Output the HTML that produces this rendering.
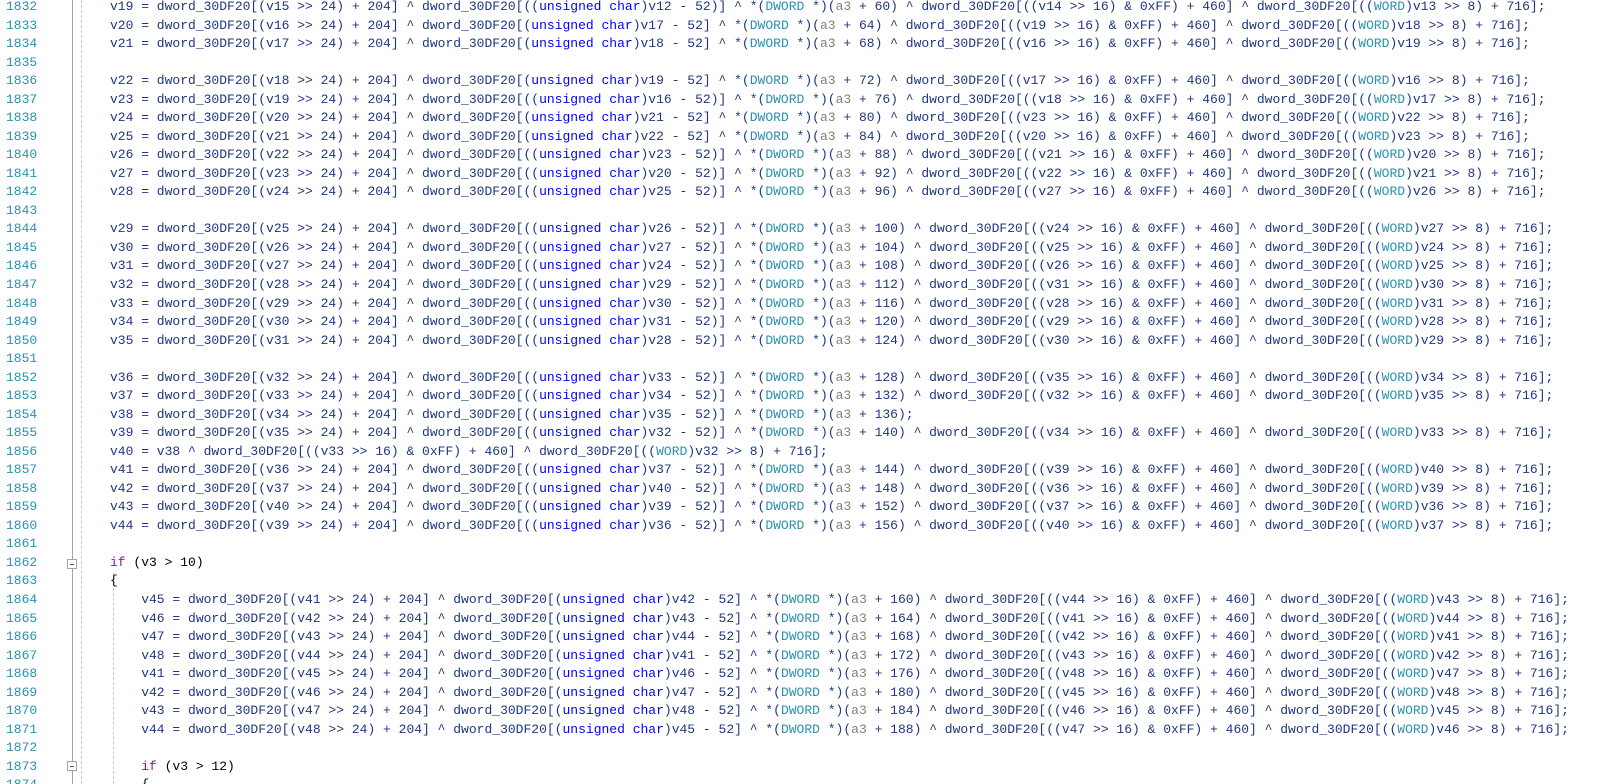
<!DOCTYPE html>
<html><head><meta charset="utf-8"><style>
html,body{margin:0;padding:0;background:#fff;width:1601px;height:784px;overflow:hidden;position:relative}
pre{margin:0;font-family:"Liberation Mono",monospace;font-size:13px;line-height:18.53px;white-space:pre;position:absolute;top:-2px}
#num{left:6px;color:#2b91af}
#code{left:110px;color:#1f377f}
.o{color:#000}
.t{color:#0000ff}
.w{color:#2b91af}
.p{color:#808080}
.k{color:#8f08c4}
.gl{position:absolute;left:72px;top:0;width:1px;height:784px;background:#a5a5a5}
.d1{position:absolute;left:81px;top:0;width:0;height:784px;border-left:1px dashed #c8c8c8}
.d2{position:absolute;left:113px;top:573px;width:0;height:211px;border-left:1px dashed #c8c8c8}
.fb{position:absolute;left:67px;width:8px;height:8px;border:1px solid #a5a5a5;background:#fff}
.fb:after{content:"";position:absolute;left:2px;top:3.5px;width:4px;height:1px;background:#555}
</style></head><body>
<div class="gl"></div><div class="d1"></div><div class="d2"></div>
<div class="fb" style="top:559px"></div>
<div class="fb" style="top:761px"></div>
<pre id="num">1832
1833
1834
1835
1836
1837
1838
1839
1840
1841
1842
1843
1844
1845
1846
1847
1848
1849
1850
1851
1852
1853
1854
1855
1856
1857
1858
1859
1860
1861
1862
1863
1864
1865
1866
1867
1868
1869
1870
1871
1872
1873
1874</pre>
<pre id="code">v19 = dword_30DF20[(v15 &gt;&gt; 24) + 204] ^ dword_30DF20[((<span class="t">unsigned char</span>)v12 - 52)] ^ *(<span class="w">DWORD</span> *)(<span class="p">a3</span> + 60) ^ dword_30DF20[((v14 &gt;&gt; 16) &amp; 0xFF) + 460] ^ dword_30DF20[((<span class="w">WORD</span>)v13 &gt;&gt; 8) + 716];
v20 = dword_30DF20[(v16 &gt;&gt; 24) + 204] ^ dword_30DF20[(<span class="t">unsigned char</span>)v17 - 52] ^ *(<span class="w">DWORD</span> *)(<span class="p">a3</span> + 64) ^ dword_30DF20[((v19 &gt;&gt; 16) &amp; 0xFF) + 460] ^ dword_30DF20[((<span class="w">WORD</span>)v18 &gt;&gt; 8) + 716];
v21 = dword_30DF20[(v17 &gt;&gt; 24) + 204] ^ dword_30DF20[(<span class="t">unsigned char</span>)v18 - 52] ^ *(<span class="w">DWORD</span> *)(<span class="p">a3</span> + 68) ^ dword_30DF20[((v16 &gt;&gt; 16) &amp; 0xFF) + 460] ^ dword_30DF20[((<span class="w">WORD</span>)v19 &gt;&gt; 8) + 716];

v22 = dword_30DF20[(v18 &gt;&gt; 24) + 204] ^ dword_30DF20[(<span class="t">unsigned char</span>)v19 - 52] ^ *(<span class="w">DWORD</span> *)(<span class="p">a3</span> + 72) ^ dword_30DF20[((v17 &gt;&gt; 16) &amp; 0xFF) + 460] ^ dword_30DF20[((<span class="w">WORD</span>)v16 &gt;&gt; 8) + 716];
v23 = dword_30DF20[(v19 &gt;&gt; 24) + 204] ^ dword_30DF20[((<span class="t">unsigned char</span>)v16 - 52)] ^ *(<span class="w">DWORD</span> *)(<span class="p">a3</span> + 76) ^ dword_30DF20[((v18 &gt;&gt; 16) &amp; 0xFF) + 460] ^ dword_30DF20[((<span class="w">WORD</span>)v17 &gt;&gt; 8) + 716];
v24 = dword_30DF20[(v20 &gt;&gt; 24) + 204] ^ dword_30DF20[(<span class="t">unsigned char</span>)v21 - 52] ^ *(<span class="w">DWORD</span> *)(<span class="p">a3</span> + 80) ^ dword_30DF20[((v23 &gt;&gt; 16) &amp; 0xFF) + 460] ^ dword_30DF20[((<span class="w">WORD</span>)v22 &gt;&gt; 8) + 716];
v25 = dword_30DF20[(v21 &gt;&gt; 24) + 204] ^ dword_30DF20[(<span class="t">unsigned char</span>)v22 - 52] ^ *(<span class="w">DWORD</span> *)(<span class="p">a3</span> + 84) ^ dword_30DF20[((v20 &gt;&gt; 16) &amp; 0xFF) + 460] ^ dword_30DF20[((<span class="w">WORD</span>)v23 &gt;&gt; 8) + 716];
v26 = dword_30DF20[(v22 &gt;&gt; 24) + 204] ^ dword_30DF20[((<span class="t">unsigned char</span>)v23 - 52)] ^ *(<span class="w">DWORD</span> *)(<span class="p">a3</span> + 88) ^ dword_30DF20[((v21 &gt;&gt; 16) &amp; 0xFF) + 460] ^ dword_30DF20[((<span class="w">WORD</span>)v20 &gt;&gt; 8) + 716];
v27 = dword_30DF20[(v23 &gt;&gt; 24) + 204] ^ dword_30DF20[((<span class="t">unsigned char</span>)v20 - 52)] ^ *(<span class="w">DWORD</span> *)(<span class="p">a3</span> + 92) ^ dword_30DF20[((v22 &gt;&gt; 16) &amp; 0xFF) + 460] ^ dword_30DF20[((<span class="w">WORD</span>)v21 &gt;&gt; 8) + 716];
v28 = dword_30DF20[(v24 &gt;&gt; 24) + 204] ^ dword_30DF20[((<span class="t">unsigned char</span>)v25 - 52)] ^ *(<span class="w">DWORD</span> *)(<span class="p">a3</span> + 96) ^ dword_30DF20[((v27 &gt;&gt; 16) &amp; 0xFF) + 460] ^ dword_30DF20[((<span class="w">WORD</span>)v26 &gt;&gt; 8) + 716];

v29 = dword_30DF20[(v25 &gt;&gt; 24) + 204] ^ dword_30DF20[((<span class="t">unsigned char</span>)v26 - 52)] ^ *(<span class="w">DWORD</span> *)(<span class="p">a3</span> + 100) ^ dword_30DF20[((v24 &gt;&gt; 16) &amp; 0xFF) + 460] ^ dword_30DF20[((<span class="w">WORD</span>)v27 &gt;&gt; 8) + 716];
v30 = dword_30DF20[(v26 &gt;&gt; 24) + 204] ^ dword_30DF20[((<span class="t">unsigned char</span>)v27 - 52)] ^ *(<span class="w">DWORD</span> *)(<span class="p">a3</span> + 104) ^ dword_30DF20[((v25 &gt;&gt; 16) &amp; 0xFF) + 460] ^ dword_30DF20[((<span class="w">WORD</span>)v24 &gt;&gt; 8) + 716];
v31 = dword_30DF20[(v27 &gt;&gt; 24) + 204] ^ dword_30DF20[((<span class="t">unsigned char</span>)v24 - 52)] ^ *(<span class="w">DWORD</span> *)(<span class="p">a3</span> + 108) ^ dword_30DF20[((v26 &gt;&gt; 16) &amp; 0xFF) + 460] ^ dword_30DF20[((<span class="w">WORD</span>)v25 &gt;&gt; 8) + 716];
v32 = dword_30DF20[(v28 &gt;&gt; 24) + 204] ^ dword_30DF20[((<span class="t">unsigned char</span>)v29 - 52)] ^ *(<span class="w">DWORD</span> *)(<span class="p">a3</span> + 112) ^ dword_30DF20[((v31 &gt;&gt; 16) &amp; 0xFF) + 460] ^ dword_30DF20[((<span class="w">WORD</span>)v30 &gt;&gt; 8) + 716];
v33 = dword_30DF20[(v29 &gt;&gt; 24) + 204] ^ dword_30DF20[((<span class="t">unsigned char</span>)v30 - 52)] ^ *(<span class="w">DWORD</span> *)(<span class="p">a3</span> + 116) ^ dword_30DF20[((v28 &gt;&gt; 16) &amp; 0xFF) + 460] ^ dword_30DF20[((<span class="w">WORD</span>)v31 &gt;&gt; 8) + 716];
v34 = dword_30DF20[(v30 &gt;&gt; 24) + 204] ^ dword_30DF20[((<span class="t">unsigned char</span>)v31 - 52)] ^ *(<span class="w">DWORD</span> *)(<span class="p">a3</span> + 120) ^ dword_30DF20[((v29 &gt;&gt; 16) &amp; 0xFF) + 460] ^ dword_30DF20[((<span class="w">WORD</span>)v28 &gt;&gt; 8) + 716];
v35 = dword_30DF20[(v31 &gt;&gt; 24) + 204] ^ dword_30DF20[((<span class="t">unsigned char</span>)v28 - 52)] ^ *(<span class="w">DWORD</span> *)(<span class="p">a3</span> + 124) ^ dword_30DF20[((v30 &gt;&gt; 16) &amp; 0xFF) + 460] ^ dword_30DF20[((<span class="w">WORD</span>)v29 &gt;&gt; 8) + 716];

v36 = dword_30DF20[(v32 &gt;&gt; 24) + 204] ^ dword_30DF20[((<span class="t">unsigned char</span>)v33 - 52)] ^ *(<span class="w">DWORD</span> *)(<span class="p">a3</span> + 128) ^ dword_30DF20[((v35 &gt;&gt; 16) &amp; 0xFF) + 460] ^ dword_30DF20[((<span class="w">WORD</span>)v34 &gt;&gt; 8) + 716];
v37 = dword_30DF20[(v33 &gt;&gt; 24) + 204] ^ dword_30DF20[((<span class="t">unsigned char</span>)v34 - 52)] ^ *(<span class="w">DWORD</span> *)(<span class="p">a3</span> + 132) ^ dword_30DF20[((v32 &gt;&gt; 16) &amp; 0xFF) + 460] ^ dword_30DF20[((<span class="w">WORD</span>)v35 &gt;&gt; 8) + 716];
v38 = dword_30DF20[(v34 &gt;&gt; 24) + 204] ^ dword_30DF20[((<span class="t">unsigned char</span>)v35 - 52)] ^ *(<span class="w">DWORD</span> *)(<span class="p">a3</span> + 136);
v39 = dword_30DF20[(v35 &gt;&gt; 24) + 204] ^ dword_30DF20[((<span class="t">unsigned char</span>)v32 - 52)] ^ *(<span class="w">DWORD</span> *)(<span class="p">a3</span> + 140) ^ dword_30DF20[((v34 &gt;&gt; 16) &amp; 0xFF) + 460] ^ dword_30DF20[((<span class="w">WORD</span>)v33 &gt;&gt; 8) + 716];
v40 = v38 ^ dword_30DF20[((v33 &gt;&gt; 16) &amp; 0xFF) + 460] ^ dword_30DF20[((<span class="w">WORD</span>)v32 &gt;&gt; 8) + 716];
v41 = dword_30DF20[(v36 &gt;&gt; 24) + 204] ^ dword_30DF20[((<span class="t">unsigned char</span>)v37 - 52)] ^ *(<span class="w">DWORD</span> *)(<span class="p">a3</span> + 144) ^ dword_30DF20[((v39 &gt;&gt; 16) &amp; 0xFF) + 460] ^ dword_30DF20[((<span class="w">WORD</span>)v40 &gt;&gt; 8) + 716];
v42 = dword_30DF20[(v37 &gt;&gt; 24) + 204] ^ dword_30DF20[((<span class="t">unsigned char</span>)v40 - 52)] ^ *(<span class="w">DWORD</span> *)(<span class="p">a3</span> + 148) ^ dword_30DF20[((v36 &gt;&gt; 16) &amp; 0xFF) + 460] ^ dword_30DF20[((<span class="w">WORD</span>)v39 &gt;&gt; 8) + 716];
v43 = dword_30DF20[(v40 &gt;&gt; 24) + 204] ^ dword_30DF20[((<span class="t">unsigned char</span>)v39 - 52)] ^ *(<span class="w">DWORD</span> *)(<span class="p">a3</span> + 152) ^ dword_30DF20[((v37 &gt;&gt; 16) &amp; 0xFF) + 460] ^ dword_30DF20[((<span class="w">WORD</span>)v36 &gt;&gt; 8) + 716];
v44 = dword_30DF20[(v39 &gt;&gt; 24) + 204] ^ dword_30DF20[((<span class="t">unsigned char</span>)v36 - 52)] ^ *(<span class="w">DWORD</span> *)(<span class="p">a3</span> + 156) ^ dword_30DF20[((v40 &gt;&gt; 16) &amp; 0xFF) + 460] ^ dword_30DF20[((<span class="w">WORD</span>)v37 &gt;&gt; 8) + 716];

<span class="k">if</span> <span class="o">(v3 &gt; 10)</span>
<span class="o">{</span>
    v45 = dword_30DF20[(v41 &gt;&gt; 24) + 204] ^ dword_30DF20[(<span class="t">unsigned char</span>)v42 - 52] ^ *(<span class="w">DWORD</span> *)(<span class="p">a3</span> + 160) ^ dword_30DF20[((v44 &gt;&gt; 16) &amp; 0xFF) + 460] ^ dword_30DF20[((<span class="w">WORD</span>)v43 &gt;&gt; 8) + 716];
    v46 = dword_30DF20[(v42 &gt;&gt; 24) + 204] ^ dword_30DF20[(<span class="t">unsigned char</span>)v43 - 52] ^ *(<span class="w">DWORD</span> *)(<span class="p">a3</span> + 164) ^ dword_30DF20[((v41 &gt;&gt; 16) &amp; 0xFF) + 460] ^ dword_30DF20[((<span class="w">WORD</span>)v44 &gt;&gt; 8) + 716];
    v47 = dword_30DF20[(v43 &gt;&gt; 24) + 204] ^ dword_30DF20[(<span class="t">unsigned char</span>)v44 - 52] ^ *(<span class="w">DWORD</span> *)(<span class="p">a3</span> + 168) ^ dword_30DF20[((v42 &gt;&gt; 16) &amp; 0xFF) + 460] ^ dword_30DF20[((<span class="w">WORD</span>)v41 &gt;&gt; 8) + 716];
    v48 = dword_30DF20[(v44 &gt;&gt; 24) + 204] ^ dword_30DF20[(<span class="t">unsigned char</span>)v41 - 52] ^ *(<span class="w">DWORD</span> *)(<span class="p">a3</span> + 172) ^ dword_30DF20[((v43 &gt;&gt; 16) &amp; 0xFF) + 460] ^ dword_30DF20[((<span class="w">WORD</span>)v42 &gt;&gt; 8) + 716];
    v41 = dword_30DF20[(v45 &gt;&gt; 24) + 204] ^ dword_30DF20[(<span class="t">unsigned char</span>)v46 - 52] ^ *(<span class="w">DWORD</span> *)(<span class="p">a3</span> + 176) ^ dword_30DF20[((v48 &gt;&gt; 16) &amp; 0xFF) + 460] ^ dword_30DF20[((<span class="w">WORD</span>)v47 &gt;&gt; 8) + 716];
    v42 = dword_30DF20[(v46 &gt;&gt; 24) + 204] ^ dword_30DF20[(<span class="t">unsigned char</span>)v47 - 52] ^ *(<span class="w">DWORD</span> *)(<span class="p">a3</span> + 180) ^ dword_30DF20[((v45 &gt;&gt; 16) &amp; 0xFF) + 460] ^ dword_30DF20[((<span class="w">WORD</span>)v48 &gt;&gt; 8) + 716];
    v43 = dword_30DF20[(v47 &gt;&gt; 24) + 204] ^ dword_30DF20[(<span class="t">unsigned char</span>)v48 - 52] ^ *(<span class="w">DWORD</span> *)(<span class="p">a3</span> + 184) ^ dword_30DF20[((v46 &gt;&gt; 16) &amp; 0xFF) + 460] ^ dword_30DF20[((<span class="w">WORD</span>)v45 &gt;&gt; 8) + 716];
    v44 = dword_30DF20[(v48 &gt;&gt; 24) + 204] ^ dword_30DF20[(<span class="t">unsigned char</span>)v45 - 52] ^ *(<span class="w">DWORD</span> *)(<span class="p">a3</span> + 188) ^ dword_30DF20[((v47 &gt;&gt; 16) &amp; 0xFF) + 460] ^ dword_30DF20[((<span class="w">WORD</span>)v46 &gt;&gt; 8) + 716];

    <span class="k">if</span> <span class="o">(v3 &gt; 12)</span>
    <span class="o">{</span></pre>
</body></html>
